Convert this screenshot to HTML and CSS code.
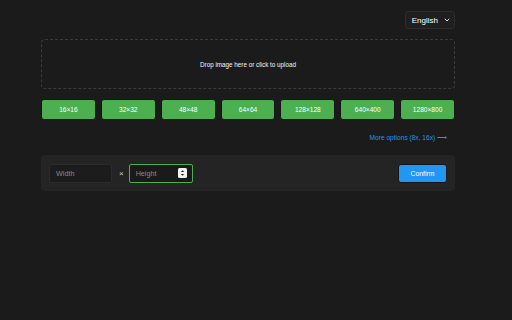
FILE: index.html
```html
<!DOCTYPE html>
<html lang="en">
<head>
    <meta charset="UTF-8">
    <meta name="viewport" content="width=device-width, initial-scale=1.0">
    <title>Icon Resizer</title>
    <link rel="stylesheet" href="styles.css">
</head>
<body>
    <div class="page">
        <div class="topbar">
            <div class="lang-select">
                <span>English</span>
                <svg class="chevron" width="6" height="4" viewBox="0 0 6 4"><path d="M0.8 0.8 L3 3 L5.2 0.8" fill="none" stroke="#ddd" stroke-width="1"/></svg>
            </div>
        </div>
        <div class="dropzone">Drop image here or click to upload</div>
        <div class="sizes">
            <button class="size-btn">16×16</button>
            <button class="size-btn">32×32</button>
            <button class="size-btn">48×48</button>
            <button class="size-btn">64×64</button>
            <button class="size-btn">128×128</button>
            <button class="size-btn">640×400</button>
            <button class="size-btn">1280×800</button>
        </div>
        <div class="more">
            <a class="more-link">More options (8x, 16x) ⟶</a>
        </div>
        <div class="custom">
            <div class="field">
                <input type="text" placeholder="Width">
            </div>
            <span class="times">×</span>
            <div class="field focused">
                <input type="text" placeholder="Height">
                <svg class="spin" width="9" height="10" viewBox="0 0 9 10">
                    <rect x="0" y="0" width="9" height="10" rx="1.5" fill="#f2f2f2"/>
                    <path d="M2.8 4 L4.5 2.2 L6.2 4 Z" fill="#222"/>
                    <path d="M2.8 6 L4.5 7.8 L6.2 6 Z" fill="#222"/>
                </svg>
            </div>
            <div class="spacer"></div>
            <button class="confirm">Confirm</button>
        </div>
    </div>
</body>
</html>
```

FILE: styles.css
```css
* {
    box-sizing: border-box;
}
body {
    margin: 0;
    background-color: #1b1b1b;
    font-family: 'Liberation Sans', Arial, sans-serif;
    color: #ffffff;
}
.page {
    width: 414px;
    margin-left: 41px;
    padding-top: 11px;
}
.topbar {
    display: flex;
    justify-content: flex-end;
}
.lang-select {
    display: flex;
    align-items: center;
    gap: 6px;
    height: 18px;
    padding: 0 4px 0 6px;
    background-color: #1f1f1f;
    border: 1px solid #2d2d2d;
    border-radius: 3px;
    font-size: 8px;
}
.chevron {
    display: block;
}
.dropzone {
    margin-top: 10px;
    height: 50px;
    border: 1px dashed #3a3a3a;
    border-radius: 4px;
    display: flex;
    align-items: center;
    justify-content: center;
    font-size: 6.3px;
    color: #f5f5f5;
}
.sizes {
    display: flex;
    gap: 5px;
    margin-top: 10px;
}
.size-btn {
    flex: 1;
    height: 21px;
    padding: 0;
    background-color: #4caf50;
    border: 1px solid #151515;
    border-radius: 3px;
    color: #ffffff;
    font-family: inherit;
    font-size: 6.6px;
}
.more {
    display: flex;
    justify-content: flex-end;
    align-items: center;
    height: 11px;
    margin-top: 12px;
    padding-right: 8px;
}
.more-link {
    color: #2196f3;
    font-size: 6.6px;
}
.custom {
    display: flex;
    align-items: center;
    height: 36px;
    margin-top: 12px;
    padding: 0 8px;
    background-color: #242424;
    border-radius: 4px;
}
.field {
    display: flex;
    align-items: center;
    width: 63px;
    height: 19px;
    padding: 0 6px;
    background-color: #1c1c1c;
    border: 1px solid #2b2b2b;
    border-radius: 2px;
}
.field.focused {
    width: 64px;
    padding-right: 5px;
    border-color: #4caf50;
    background-color: #1a1a1a;
}
.field input {
    width: 100%;
    min-width: 0;
    padding: 0;
    border: none;
    outline: none;
    background: transparent;
    color: #ffffff;
    font-family: inherit;
    font-size: 7.2px;
}
.field input::placeholder {
    color: #8a8a8a;
}
.spin {
    flex-shrink: 0;
    display: block;
}
.times {
    margin: 0 5px 0 7px;
    font-size: 8px;
    color: #cfcfcf;
}
.spacer {
    flex: 1;
}
.confirm {
    width: 49px;
    height: 19px;
    padding: 0;
    background-color: #2196f3;
    border: 1px solid #151515;
    border-radius: 3px;
    color: #ffffff;
    font-family: inherit;
    font-size: 6.8px;
}
```
